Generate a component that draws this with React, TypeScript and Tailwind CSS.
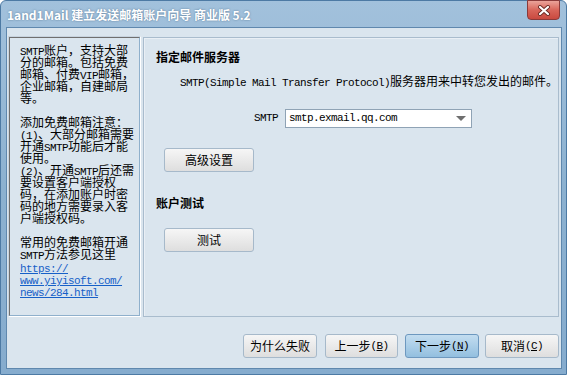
import React from 'react';

const cjk = "font-['Noto_Sans_CJK_SC',sans-serif]";
// half-width latin like the SimSun bitmap font: 11px mono squeezed to a 6px advance
const mono = "font-['Liberation_Mono',monospace] text-[11px] tracking-[-0.6px]";

const Mixed: React.FC<{ text: string }> = ({ text }) => {
  const parts = text.split(/([\x20-\x7e]+)/).filter((p) => p !== '');
  return (
    <>
      {parts.map((p, i) =>
        /^[\x20-\x7e]+$/.test(p) ? (
          <span key={i} className={`${mono} whitespace-pre`}>
            {p}
          </span>
        ) : (
          <span key={i}>{p}</span>
        )
      )}
    </>
  );
};

const leftLines = [
  'SMTP账户，支持大部',
  '分的邮箱。包括免费',
  '邮箱、付费VIP邮箱，',
  '企业邮箱，自建邮局',
  '等。',
  '',
  '添加免费邮箱注意：',
  '(1)、大部分邮箱需要',
  '开通SMTP功能后才能',
  '使用。',
  '(2)、开通SMTP后还需',
  '要设置客户端授权',
  '码，在添加账户时密',
  '码的地方需要录入客',
  '户端授权码。',
  '',
  '常用的免费邮箱开通',
  'SMTP方法参见这里',
];

const linkLines = ['https://', 'www.yiyisoft.com/', 'news/284.html'];

const WinButton: React.FC<{ children: React.ReactNode; primary?: boolean; className?: string }> = ({
  children,
  primary,
  className,
}) => (
  <button
    className={`h-[24px] rounded-[3px] border text-[12px] text-black ${cjk} flex items-center justify-center ${
      primary
        ? 'border-[#6d98bf] bg-gradient-to-b from-[#c3ddf0] to-[#93bfdf]'
        : 'border-[#a6b9ca] bg-gradient-to-b from-[#f6f6f6] to-[#dedede]'
    } ${className ?? ''}`}
  >
    {children}
  </button>
);

const Key: React.FC<{ k: string }> = ({ k }) => (
  <span className={mono}>
    (<span className="underline">{k}</span>)
  </span>
);

export default function App() {
  return (
    <div className="w-[567px] h-[375px] overflow-hidden bg-white">
      <div className="w-[567px] h-[375px] flex flex-col rounded-t-[6px] border border-[#4d7aa4] bg-gradient-to-b from-[#a2c1dc] via-[#8cb1d0] to-[#86acce]">
        {/* title bar */}
        <div className="h-[26px] flex items-start justify-between pl-[6px] pr-[6px]">
          <div
            className={`mt-[7px] text-[12px] leading-[14px] font-bold text-white ${cjk} [text-shadow:0_0_2px_rgba(40,70,100,0.6)]`}
          >
            1and1Mail 建立发送邮箱账户向导 商业版 5.2
          </div>
          <div className="w-[33px] h-[20px] -mt-px rounded-b-[4px] border border-[#8a3a3a] bg-gradient-to-b from-[#eaa39a] via-[#d8655a] to-[#c9493f] flex items-center justify-center">
            <svg width="14" height="11" viewBox="0 0 14 11">
              <path d="M3 2 L11 9 M11 2 L3 9" stroke="#6b2a24" strokeWidth="4" strokeLinecap="round" />
              <path d="M3 2 L11 9 M11 2 L3 9" stroke="#ffffff" strokeWidth="2.2" strokeLinecap="round" />
            </svg>
          </div>
        </div>

        {/* client area */}
        <div className="flex-1 ml-[5px] mr-[4px] mb-[5px] border border-[#5f88ae] bg-[#dae5ee] flex flex-col">
          <div className="flex items-start pl-[1px] pt-[8px] pr-[2px] gap-[2px]">
            {/* left info panel */}
            <div className="w-[133px] h-[281px] border border-t-[#c7d3de] border-l-[#c7d3de] border-r-white border-b-white">
              <div className="h-full border border-t-[#6f6f6f] border-l-[#6f6f6f] border-r-[#8fb0cc] border-b-[#8fb0cc] pl-[10px] pt-[6px]">
                <div className={`text-[12px] leading-[12px] text-black ${cjk} whitespace-nowrap`}>
                  {leftLines.map((l, i) => (
                    <div key={i} className="h-[12px]">
                      <Mixed text={l} />
                    </div>
                  ))}
                  {linkLines.map((l, i) => (
                    <div key={i} className="h-[12px] leading-[13px]">
                      <span className={`${mono} text-[#1660c8] underline`}>{l}</span>
                    </div>
                  ))}
                </div>
              </div>
            </div>

            {/* right settings panel */}
            <div className="flex-1 h-[280px] mt-[1px] border border-[#a9bccd] flex flex-col">
              <div className="h-full border-l border-t border-white/40 pl-[11px] pt-[11px]">
                <div className={`text-[12px] leading-[14px] font-bold text-black ${cjk}`}>指定邮件服务器</div>
                <div className={`mt-[10px] pl-[24px] text-[12px] leading-[14px] text-black ${cjk} whitespace-nowrap`}>
                  <Mixed text="SMTP(Simple Mail Transfer Protocol)服务器用来中转您发出的邮件。" />
                </div>
                <div className="mt-[19px] flex items-center pl-[98px]">
                  <span className={`${mono} text-black`}>SMTP</span>
                  <div className="ml-[7px] w-[187px] h-[19px] border border-[#8fa3b5] bg-white flex items-center justify-between pl-[3px] pr-[5px]">
                    <span className={`${mono} text-black`}>smtp.exmail.qq.com</span>
                    <svg width="10" height="6" viewBox="0 0 10 6">
                      <path d="M0 0 H10 L5 5 Z" fill="#6f6f6f" />
                    </svg>
                  </div>
                </div>
                <div className="mt-[20px] pl-[8px]">
                  <WinButton className="w-[90px]">高级设置</WinButton>
                </div>
                <div className={`mt-[24px] text-[12px] leading-[14px] font-bold text-black ${cjk}`}>账户测试</div>
                <div className="mt-[18px] pl-[8px]">
                  <WinButton className="w-[90px]">测试</WinButton>
                </div>
              </div>
            </div>
          </div>

          {/* bottom buttons */}
          <div className="mt-[17px] flex justify-end gap-[7px] pr-[2px]">
            <WinButton className="w-[74px]">为什么失败</WinButton>
            <WinButton className="w-[73px] ml-px">
              上一步<Key k="B" />
            </WinButton>
            <WinButton primary className="w-[74px]">
              下一步<Key k="N" />
            </WinButton>
            <WinButton className="w-[74px] -ml-px">
              取消<Key k="C" />
            </WinButton>
          </div>
        </div>
      </div>
    </div>
  );
}
